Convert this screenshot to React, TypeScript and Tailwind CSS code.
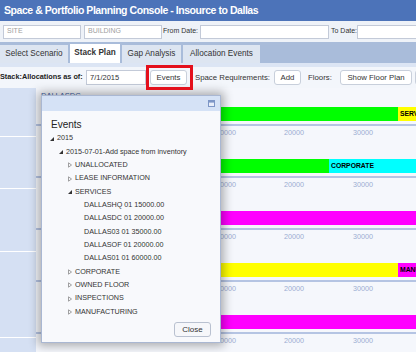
import React from "react";

type Seg = { w: number; color: string; label?: string };

// only the first row's label peeks out above the dialog
const rows: { name: string; segs: Seg[] }[] = [
  { name: "DALLASDC", segs: [{ w: 338, color: "bg-[#00ff00]" }, { w: 60, color: "bg-[#ffff00]", label: "SERVICES" }] },
  { name: "", segs: [{ w: 269, color: "bg-[#00ff00]" }, { w: 120, color: "bg-[#00ffff]", label: "CORPORATE" }] },
  { name: "", segs: [{ w: 400, color: "bg-[#ff00ff]" }] },
  { name: "", segs: [{ w: 338, color: "bg-[#ffff00]" }, { w: 60, color: "bg-[#ff00ff]", label: "MANUFACTURING" }] },
  { name: "", segs: [{ w: 400, color: "bg-[#ff00ff]" }] },
];

const ticks = [
  { v: "10000", x: 180 },
  { v: "20000", x: 248 },
  { v: "30000", x: 317 },
];

function Field({ w, text, ml }: { w: string; text?: string; ml: string }) {
  return (
    <div className={`${w} ${ml} shrink-0 h-[14px] border border-[#c3cad8] bg-white text-[#a0a0a0] text-[7px] px-[3px] flex items-center`}>
      {text}
    </div>
  );
}

function Btn({ children, className }: { children: React.ReactNode; className: string }) {
  return (
    <div className={`shrink-0 h-[15px] rounded-[3px] border border-[#c8cfdb] bg-white flex items-center justify-center text-[7.8px] text-[#333] ${className}`}>
      {children}
    </div>
  );
}

function Tri({ open }: { open: boolean }) {
  return open ? (
    <svg width="8" height="6" viewBox="0 0 8 6" className="shrink-0">
      <polygon points="1,5 5,1 5,5" fill="#333" />
    </svg>
  ) : (
    <svg width="8" height="6" viewBox="0 0 8 6" className="shrink-0">
      <polygon points="1.5,0.8 4.5,3 1.5,5.2" fill="none" stroke="#8a8a8a" strokeWidth="0.8" />
    </svg>
  );
}

type Node = { level: number; text: string; open?: boolean; leaf?: boolean };

const tree: Node[] = [
  { level: 0, text: "2015", open: true },
  { level: 1, text: "2015-07-01-Add space from inventory", open: true },
  { level: 2, text: "UNALLOCATED" },
  { level: 2, text: "LEASE INFORMATION" },
  { level: 2, text: "SERVICES", open: true },
  { level: 3, text: "DALLASHQ 01 15000.00", leaf: true },
  { level: 3, text: "DALLASDC 01 20000.00", leaf: true },
  { level: 3, text: "DALLAS03 01 35000.00", leaf: true },
  { level: 3, text: "DALLASOF 01 20000.00", leaf: true },
  { level: 3, text: "DALLAS01 01 60000.00", leaf: true },
  { level: 2, text: "CORPORATE" },
  { level: 2, text: "OWNED FLOOR" },
  { level: 2, text: "INSPECTIONS" },
  { level: 2, text: "MANUFACTURING" },
];

const indent = ["pl-[7px]", "pl-[16px]", "pl-[25px]", "pl-[34px]"];

function EventsDialog() {
  return (
    <div className="absolute left-[41px] top-[95px] w-[180px] h-[248px] border border-[#a9b7d2] bg-[#f8f9fc] shadow-[0_0_9px_3px_rgba(0,0,0,0.3)] flex flex-col">
      <div className="h-[15px] shrink-0 bg-[#d5e2f6] flex items-center justify-end pr-[5px]">
        <svg width="7" height="7" viewBox="0 0 7 7">
          <rect x="0.5" y="0.5" width="6" height="6" fill="#e8eef9" stroke="#7d96c6" />
          <rect x="1" y="1" width="5" height="1.6" fill="#7d96c6" />
        </svg>
      </div>
      <div className="pl-[9px] pt-[6px] h-[15px] leading-[15px] text-[10px] text-[#222] box-content">Events</div>
      <div className="flex flex-col">
        {tree.map((n, i) => (
          <div key={i} className={`h-[13.33px] flex items-center text-[7.2px] text-[#333] ${indent[n.level]}`}>
            {n.leaf ? <span className="w-[8px] shrink-0" /> : <Tri open={!!n.open} />}
            <span className="whitespace-nowrap">{n.text}</span>
          </div>
        ))}
      </div>
      <div className="mt-auto self-end mr-[9px] mb-[5px] w-[37px] h-[15px] rounded-[3px] border border-[#b9c1d0] bg-[#f6f7fa] flex items-center justify-center text-[8px] text-[#333]">
        Close
      </div>
    </div>
  );
}

export default function App() {
  return (
    <div className="relative w-[416px] h-[352px] overflow-hidden bg-[#f5f7fc] text-[#333] font-['Liberation_Sans',Arial,sans-serif] flex flex-col">
      <div className="h-[21px] shrink-0 bg-[#4c73b9] text-white font-bold text-[10.5px] tracking-[-0.45px] pl-[4px] flex items-center whitespace-nowrap">
        Space &amp; Portfolio Planning Console - Insource to Dallas
      </div>

      <div className="h-[21px] shrink-0 bg-[#eef2f8] flex items-center whitespace-nowrap overflow-hidden">
        <Field w="w-[78px]" ml="ml-[3px]" text="SITE" />
        <Field w="w-[78px]" ml="ml-[3px]" text="BUILDING" />
        <span className="ml-[1px] w-[37px] shrink-0 text-[7px] text-[#333]">From Date:</span>
        <Field w="w-[129px]" ml="ml-0" />
        <span className="ml-[2px] w-[26px] shrink-0 text-[7px] text-[#333]">To Date:</span>
        <Field w="w-[70px]" ml="ml-0" />
      </div>

      <div className="h-[21px] shrink-0 bg-[#a9bcda] flex items-end gap-[2px] text-[8.2px] text-[#333] whitespace-nowrap">
        <div className="w-[68px] shrink-0 h-[18px] bg-[#dde5f1] flex items-center justify-center">Select Scenario</div>
        <div className="w-[50px] shrink-0 h-[19px] bg-white flex items-center justify-center font-bold">Stack Plan</div>
        <div className="w-[59px] shrink-0 h-[18px] bg-[#dde5f1] flex items-center justify-center">Gap Analysis</div>
        <div className="w-[77px] shrink-0 h-[18px] bg-[#dde5f1] flex items-center justify-center">Allocation Events</div>
      </div>
      <div className="h-[4px] shrink-0 bg-[#dce5f4]" />

      <div className="h-[21px] shrink-0 bg-[#f3f6fb] flex items-center whitespace-nowrap overflow-hidden text-[7.8px]">
        <span className="font-bold text-[#222] text-[7.3px] w-[86px] shrink-0">Stack:Allocations as of:</span>
        <div className="w-[60px] shrink-0 h-[15px] border border-[#c3cad8] bg-white px-[3px] flex items-center text-[7.5px]">7/1/2015</div>
        <Btn className="ml-[4px] w-[37px]">Events</Btn>
        <span className="ml-[8px] w-[79px] shrink-0">Space Requirements:</span>
        <Btn className="w-[27px]">Add</Btn>
        <span className="ml-[7px] w-[32px] shrink-0">Floors:</span>
        <Btn className="w-[72px]">Show Floor Plan</Btn>
        <Btn className="ml-[3px] w-[20px]">{""}</Btn>
      </div>

      <div className="flex-1 flex">
        <div className="w-[36px] shrink-0 bg-[#d5e0f3] flex flex-col">
          <div className="h-[49px] border-b border-white" />
          <div className="h-[52px] border-b border-white" />
          <div className="h-[63px] border-b border-white" />
          <div className="h-[86px] border-b border-white" />
        </div>
        <div className="flex-1 pt-[3px] overflow-hidden">
          {rows.map((r, k) => (
            <div key={k} className="h-[52px] flex flex-col">
              <div className="h-[16px] pl-[5px] text-[7.5px] text-[#3d5fa6] leading-[10px]">{r.name}</div>
              <div className="h-[14px] flex ml-[24px]">
                {r.segs.map((s, i) => (
                  <div key={i} className={`${s.color} shrink-0 h-full flex items-center pl-[2px] text-[6.8px] font-bold text-black whitespace-nowrap overflow-hidden`} style={{ width: s.w }}>
                    {s.label}
                  </div>
                ))}
              </div>
              <div className="mt-[3px] h-[2px] bg-[#b5c4e3]" />
              <div className="relative h-[10px] mt-[3px]">
                {ticks.map((t) => (
                  <span key={t.v} className="absolute top-0 text-[7.2px] text-[#9badd2] leading-[8px]" style={{ left: t.x }}>
                    {t.v}
                  </span>
                ))}
              </div>
            </div>
          ))}
        </div>
      </div>

      <EventsDialog />
      <div className="absolute left-[146px] top-[65px] w-[47px] h-[25px] border-[3px] border-[#e4101c]" />
    </div>
  );
}
